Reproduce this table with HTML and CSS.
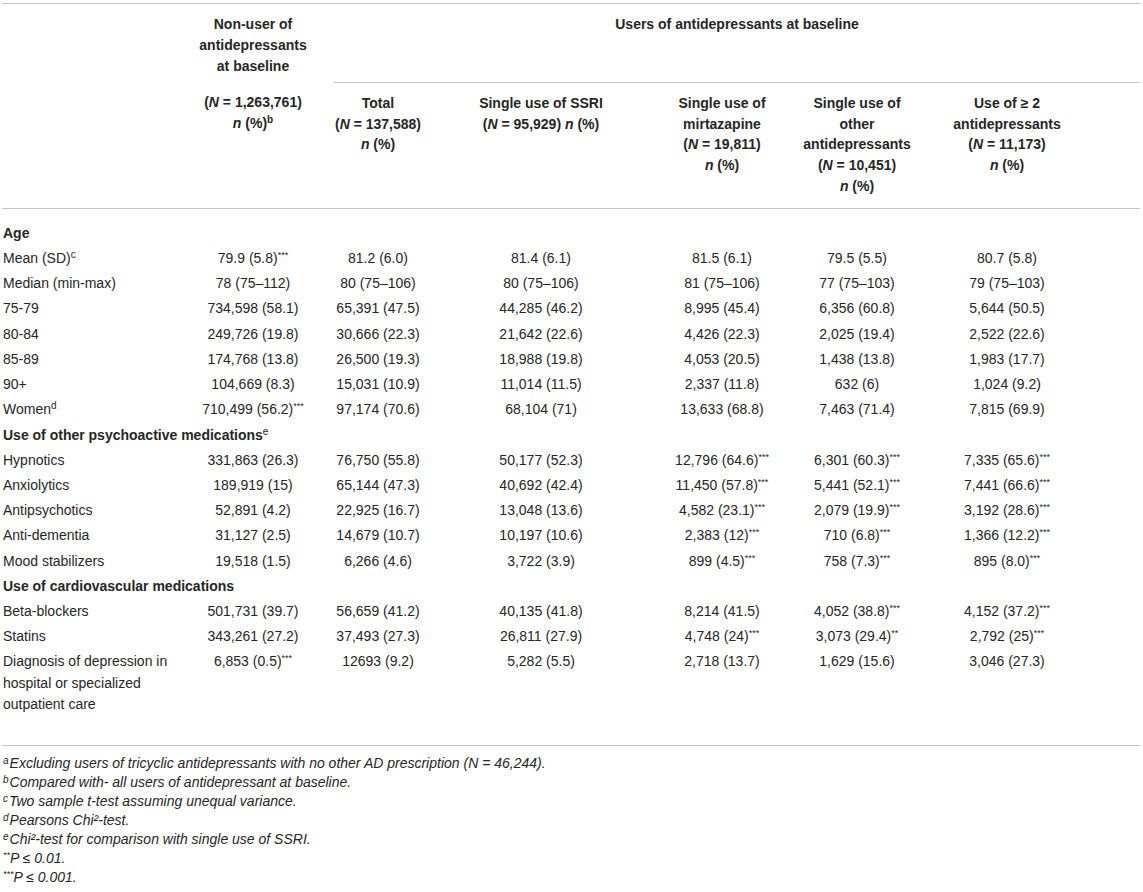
FILE: index.html
```html
<!DOCTYPE html>
<html lang="en">
<head>
<meta charset="utf-8">
<title>Table</title>
<link rel="stylesheet" href="styles.css">
</head>
<body>
<table class="data">
  <colgroup>
    <col class="c1"><col class="c2"><col class="c3"><col class="c4"><col class="c5"><col class="c6"><col class="c7">
  </colgroup>
  <thead>
    <tr class="hrow1">
      <th class="stub" rowspan="2"></th>
      <th>Non-user of<br>antidepressants<br>at baseline</th>
      <th class="group" colspan="5">Users of antidepressants at baseline</th>
    </tr>
    <tr class="hrow2">
      <th>(<i>N</i> = 1,263,761)<br><i>n</i> (%)<sup class="fn">b</sup></th>
      <th>Total<br>(<i>N</i> = 137,588)<br><i>n</i> (%)</th>
      <th>Single use of SSRI<br>(<i>N</i> = 95,929) <i>n</i> (%)</th>
      <th>Single use of<br>mirtazapine<br>(<i>N</i> = 19,811)<br><i>n</i> (%)</th>
      <th>Single use of<br>other<br>antidepressants<br>(<i>N</i> = 10,451)<br><i>n</i> (%)</th>
      <th class="last">Use of ≥ 2<br>antidepressants<br>(<i>N</i> = 11,173)<br><i>n</i> (%)</th>
    </tr>
  </thead>
  <tbody>
    <tr class="first section"><td colspan="7">Age</td></tr>
    <tr><td>Mean (SD)<sup class="fn">c</sup></td><td>79.9 (5.8)<sup>***</sup></td><td>81.2 (6.0)</td><td>81.4 (6.1)</td><td>81.5 (6.1)</td><td>79.5 (5.5)</td><td class="last">80.7 (5.8)</td></tr>
    <tr><td>Median (min-max)</td><td>78 (75–112)</td><td>80 (75–106)</td><td>80 (75–106)</td><td>81 (75–106)</td><td>77 (75–103)</td><td class="last">79 (75–103)</td></tr>
    <tr><td>75-79</td><td>734,598 (58.1)</td><td>65,391 (47.5)</td><td>44,285 (46.2)</td><td>8,995 (45.4)</td><td>6,356 (60.8)</td><td class="last">5,644 (50.5)</td></tr>
    <tr><td>80-84</td><td>249,726 (19.8)</td><td>30,666 (22.3)</td><td>21,642 (22.6)</td><td>4,426 (22.3)</td><td>2,025 (19.4)</td><td class="last">2,522 (22.6)</td></tr>
    <tr><td>85-89</td><td>174,768 (13.8)</td><td>26,500 (19.3)</td><td>18,988 (19.8)</td><td>4,053 (20.5)</td><td>1,438 (13.8)</td><td class="last">1,983 (17.7)</td></tr>
    <tr><td>90+</td><td>104,669 (8.3)</td><td>15,031 (10.9)</td><td>11,014 (11.5)</td><td>2,337 (11.8)</td><td>632 (6)</td><td class="last">1,024 (9.2)</td></tr>
    <tr><td>Women<sup class="fn">d</sup></td><td>710,499 (56.2)<sup>***</sup></td><td>97,174 (70.6)</td><td>68,104 (71)</td><td>13,633 (68.8)</td><td>7,463 (71.4)</td><td class="last">7,815 (69.9)</td></tr>
    <tr class="section"><td colspan="7">Use of other psychoactive medications<sup class="fn">e</sup></td></tr>
    <tr><td>Hypnotics</td><td>331,863 (26.3)</td><td>76,750 (55.8)</td><td>50,177 (52.3)</td><td>12,796 (64.6)<sup>***</sup></td><td>6,301 (60.3)<sup>***</sup></td><td class="last">7,335 (65.6)<sup>***</sup></td></tr>
    <tr><td>Anxiolytics</td><td>189,919 (15)</td><td>65,144 (47.3)</td><td>40,692 (42.4)</td><td>11,450 (57.8)<sup>***</sup></td><td>5,441 (52.1)<sup>***</sup></td><td class="last">7,441 (66.6)<sup>***</sup></td></tr>
    <tr><td>Antipsychotics</td><td>52,891 (4.2)</td><td>22,925 (16.7)</td><td>13,048 (13.6)</td><td>4,582 (23.1)<sup>***</sup></td><td>2,079 (19.9)<sup>***</sup></td><td class="last">3,192 (28.6)<sup>***</sup></td></tr>
    <tr><td>Anti-dementia</td><td>31,127 (2.5)</td><td>14,679 (10.7)</td><td>10,197 (10.6)</td><td>2,383 (12)<sup>***</sup></td><td>710 (6.8)<sup>***</sup></td><td class="last">1,366 (12.2)<sup>***</sup></td></tr>
    <tr><td>Mood stabilizers</td><td>19,518 (1.5)</td><td>6,266 (4.6)</td><td>3,722 (3.9)</td><td>899 (4.5)<sup>***</sup></td><td>758 (7.3)<sup>***</sup></td><td class="last">895 (8.0)<sup>***</sup></td></tr>
    <tr class="section"><td colspan="7">Use of cardiovascular medications</td></tr>
    <tr><td>Beta-blockers</td><td>501,731 (39.7)</td><td>56,659 (41.2)</td><td>40,135 (41.8)</td><td>8,214 (41.5)</td><td>4,052 (38.8)<sup>***</sup></td><td class="last">4,152 (37.2)<sup>***</sup></td></tr>
    <tr><td>Statins</td><td>343,261 (27.2)</td><td>37,493 (27.3)</td><td>26,811 (27.9)</td><td>4,748 (24)<sup>***</sup></td><td>3,073 (29.4)<sup>**</sup></td><td class="last">2,792 (25)<sup>***</sup></td></tr>
    <tr class="end"><td>Diagnosis of depression in hospital or specialized outpatient care</td><td>6,853 (0.5)<sup>***</sup></td><td>12693 (9.2)</td><td>5,282 (5.5)</td><td>2,718 (13.7)</td><td>1,629 (15.6)</td><td class="last">3,046 (27.3)</td></tr>
  </tbody>
</table>
<div class="notes">
  <p><sup class="fn">a</sup>Excluding users of tricyclic antidepressants with no other AD prescription (N = 46,244).</p>
  <p><sup class="fn">b</sup>Compared with- all users of antidepressant at baseline.</p>
  <p><sup class="fn">c</sup>Two sample t-test assuming unequal variance.</p>
  <p><sup class="fn">d</sup>Pearsons Chi²-test.</p>
  <p><sup class="fn">e</sup>Chi²-test for comparison with single use of SSRI.</p>
  <p><sup class="star">**</sup>P ≤ 0.01.</p>
  <p><sup class="star">***</sup>P ≤ 0.001.</p>
</div>
</body>
</html>
```
FILE: styles.css
```css
html, body {
  margin: 0;
  padding: 0;
  background: #ffffff;
}

body {
  font-family: "Liberation Sans", Arial, Helvetica, sans-serif;
  font-size: 14px;
  color: #262626;
}

.data {
  margin: 3px 0 0 2px;
  width: 1138px;
  border-collapse: collapse;
  table-layout: fixed;
  border-top: 1px solid #c4c4c4;
  border-bottom: 1px solid #c4c4c4;
}

.c1 { width: 170px; }
.c2 { width: 162px; }
.c3 { width: 88px; }
.c4 { width: 238px; }
.c5 { width: 124px; }
.c6 { width: 146px; }
.c7 { width: 210px; }

.data th {
  font-weight: bold;
  text-align: center;
  vertical-align: top;
  line-height: 20.8px;
  padding: 0;
}

.hrow1 th {
  padding: 10px 0 6px;
}

.hrow1 th.group {
  border-bottom: 1px solid #c4c4c4;
}

.hrow2 {
  border-bottom: 1px solid #c4c4c4;
}

.hrow2 th {
  padding: 10px 0 11px;
}

.data th.last,
.data td.last {
  padding-right: 56px;
}

.data td {
  line-height: 21.2px;
  padding: 2px 0;
  text-align: center;
  vertical-align: top;
  white-space: nowrap;
}

.data td:first-child {
  text-align: left;
  padding-left: 1px;
  white-space: normal;
}

.section td {
  font-weight: bold;
}

.first td {
  padding-top: 14px;
}

.end td {
  padding-bottom: 30px;
}

sup {
  font-size: 9px;
  line-height: 0;
  vertical-align: 5px;
}

sup.fn {
  font-size: 10px;
  font-weight: normal;
}

th sup.fn {
  font-weight: bold;
}

.notes {
  margin: 8px 0 0 3px;
  font-size: 14px;
  font-style: italic;
  color: #262626;
}

.notes p {
  margin: 0;
  line-height: 19px;
}

.notes sup.fn {
  font-size: 10px;
  vertical-align: 4px;
  margin-right: 1px;
}
```
